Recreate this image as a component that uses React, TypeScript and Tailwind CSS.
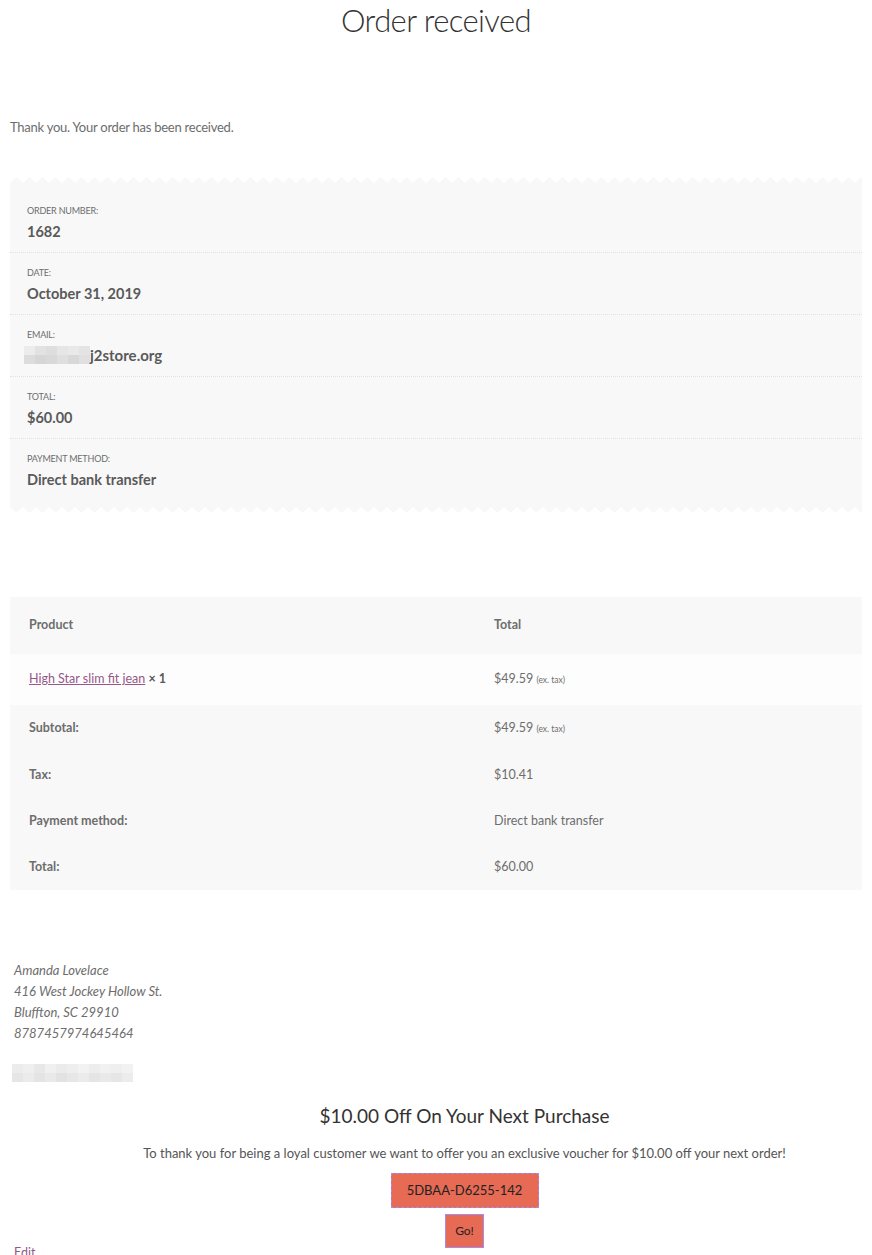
import React from "react";

const font = { fontFamily: "Lato, 'Liberation Sans', sans-serif" };

function Zigzag({ flip }: { flip?: boolean }) {
  return (
    <svg className="block w-full h-[7px]" preserveAspectRatio="none">
      <defs>
        <pattern id={flip ? "zz-b" : "zz-t"} width="13" height="7" patternUnits="userSpaceOnUse">
          {flip ? <polygon points="0,0 13,0 13,1 6.5,7 0,1" fill="#f8f8f8" /> : <polygon points="0,7 0,6 6.5,0 13,6 13,7" fill="#f8f8f8" />}
        </pattern>
      </defs>
      <rect width="100%" height="7" fill={`url(#${flip ? "zz-b" : "zz-t"})`} />
    </svg>
  );
}

function Pixels({ rows }: { rows: string[][] }) {
  return (
    <div className="flex flex-col">
      {rows.map((r, i) => (
        <div key={i} className="flex">
          {r.map((c, j) => (
            <div key={j} className="w-[11px] h-[9px]" style={{ background: c }} />
          ))}
        </div>
      ))}
    </div>
  );
}

const details = [
  { label: "Order number:", value: "1682" },
  { label: "Date:", value: "October 31, 2019" },
  { label: "Email:", value: "email" },
  { label: "Total:", value: "$60.00" },
  { label: "Payment method:", value: "Direct bank transfer" },
];

export default function App() {
  return (
    <div className="w-[872px] h-[1255px] overflow-hidden bg-white text-[#6d6d6d]" style={font}>
      <h1 className="text-center text-[31px] font-light text-[#333] leading-[40px] tracking-[-0.6px]">Order received</h1>

      <p className="mt-[77px] ml-[10px] text-[13px] tracking-[-0.25px] leading-5">Thank you. Your order has been received.</p>

      <div className="mt-[40px] mx-[10px]">
        <Zigzag />
        <ul className="bg-[#f8f8f8] pt-[7px] pb-[5px]">
          {details.map((d, i) => (
            <li
              key={d.label}
              className={`h-[62px] pt-[14px] px-[17px] ${i < details.length - 1 ? "border-b border-dotted border-[#e2e2e2]" : ""}`}
            >
              <div className="uppercase text-[9px] leading-[12px] tracking-[-0.2px]">{d.label}</div>
              {d.value === "email" ? (
                <div className="flex items-center mt-[4px]">
                  <div className="-ml-[3px]">
                    <Pixels
                      rows={[
                        ["#ececec", "#e2e2e2", "#dedede", "#e6e6e6", "#e9e9e9", "#e4e4e4"],
                        ["#dcdcdc", "#d6d6d6", "#d9d9d9", "#dfdfdf", "#d8d8d8", "#e0e0e0"],
                      ]}
                    />
                  </div>
                  <span className="font-bold text-[15px] leading-5 text-[#5a5a5a]">j2store.org</span>
                </div>
              ) : (
                <div className="font-bold text-[14.5px] leading-5 mt-[5px] text-[#5a5a5a]">{d.value}</div>
              )}
            </li>
          ))}
        </ul>
        <Zigzag flip />
      </div>

      <table className="mt-[84px] ml-[10px] w-[852px] border-collapse text-[12.5px]">
        <thead>
          <tr className="h-[57px] bg-[#f8f8f8]">
            <th className="w-[484px] text-left pl-[19px] font-bold">Product</th>
            <th className="text-left font-bold">Total</th>
          </tr>
        </thead>
        <tbody>
          <tr className="h-[51px] bg-[#fdfdfd]">
            <td className="pl-[19px]">
              <a href="#" className="underline text-[#96588a]">High Star slim fit jean</a>{" "}
              <strong className="font-bold text-[#5a5a5a]">× 1</strong>
            </td>
            <td>
              $49.59 <small className="text-[8.5px]">(ex. tax)</small>
            </td>
          </tr>
        </tbody>
        <tfoot className="bg-[#f8f8f8]">
          <tr className="h-[47px]">
            <th className="text-left pl-[19px] font-bold">Subtotal:</th>
            <td>
              $49.59 <small className="text-[8.5px]">(ex. tax)</small>
            </td>
          </tr>
          <tr className="h-[46px]">
            <th className="text-left pl-[19px] font-bold">Tax:</th>
            <td>$10.41</td>
          </tr>
          <tr className="h-[46px]">
            <th className="text-left pl-[19px] font-bold">Payment method:</th>
            <td>Direct bank transfer</td>
          </tr>
          <tr className="h-[46px]">
            <th className="text-left pl-[19px] font-bold">Total:</th>
            <td>$60.00</td>
          </tr>
        </tfoot>
      </table>

      <address className="mt-[70px] ml-[14px] italic text-[13px] leading-[21px]">
        Amanda Lovelace
        <br />
        416 West Jockey Hollow St.
        <br />
        Bluffton, SC 29910
        <br />
        8787457974645464
      </address>

      <div className="mt-[20px] ml-[12px]">
        <Pixels
          rows={[
            ["#ececec", "#efefef", "#e8e8e8", "#f0f0f0", "#ebebeb", "#eeeeee", "#f2f2f2", "#ededed", "#f1f1f1", "#efefef", "#f2f2f2"],
            ["#e6e6e6", "#ebebeb", "#e4e4e4", "#e9e9e9", "#e2e2e2", "#e7e7e7", "#ebebeb", "#e5e5e5", "#e9e9e9", "#e6e6e6", "#ececec"],
          ]}
        />
      </div>

      <div className="ml-[57px] text-center mt-[22px]">
        <h2 className="text-[19px] leading-6 text-[#333]">$10.00 Off On Your Next Purchase</h2>
        <p className="mt-[15px] text-[13px] leading-5 text-[#555]">
          To thank you for being a loyal customer we want to offer you an exclusive voucher for $10.00 off your next order!
        </p>
        <div className="flex flex-col items-center mt-[10px]">
          <div className="w-[148px] h-[35px] flex items-center justify-center bg-[#e66a54] border border-dashed border-[#a68cf0] text-[13px] text-[#222]">
            5DBAA-D6255-142
          </div>
          <button className="mt-[6px] w-[39px] h-[34px] bg-[#e66a54] border border-[#a68cf0] text-[12px] text-[#222]">Go!</button>
        </div>
      </div>

      <a href="#" className="block ml-[14px] -mt-[4px] text-[12.5px] text-[#96588a]">Edit</a>
    </div>
  );
}
